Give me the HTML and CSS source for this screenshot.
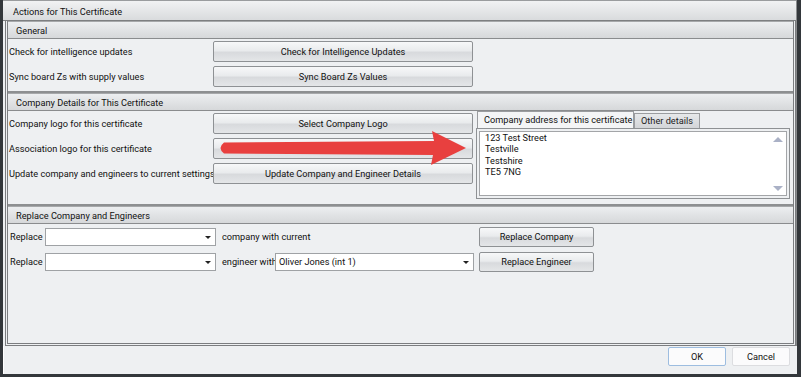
FILE: index.html
```html
<!DOCTYPE html>
<html lang="en">
<head>
  <meta charset="UTF-8">
  <title>Actions for This Certificate</title>
  <link rel="stylesheet" href="styles.css">
</head>
<body>
  <div class="window">
    <div class="main-group">
      <div class="main-title">Actions for This Certificate</div>
      <div class="main-body">

        <div class="section">
          <div class="section-title">General</div>
          <div class="section-body rows">
            <div class="row">
              <span class="label">Check for intelligence updates</span>
              <button class="btn wide">Check for Intelligence Updates</button>
            </div>
            <div class="row">
              <span class="label">Sync board Zs with supply values</span>
              <button class="btn wide">Sync Board Zs Values</button>
            </div>
          </div>
        </div>

        <div class="section">
          <div class="section-title">Company Details for This Certificate</div>
          <div class="section-body company">
            <div class="rows">
              <div class="row">
                <span class="label">Company logo for this certificate</span>
                <button class="btn wide">Select Company Logo</button>
              </div>
              <div class="row">
                <span class="label">Association logo for this certificate</span>
                <button class="btn wide">Select Association Logo</button>
              </div>
              <div class="row">
                <span class="label">Update company and engineers to current settings</span>
                <button class="btn wide">Update Company and Engineer Details</button>
              </div>
            </div>
            <div class="tabs">
              <div class="tab-strip">
                <span class="tab active">Company address for this certificate</span>
                <span class="tab">Other details</span>
              </div>
              <div class="tab-page">
                <div class="address">
                  <div>123 Test Street</div>
                  <div>Testville</div>
                  <div>Testshire</div>
                  <div>TE5 7NG</div>
                  <span class="scroll-up"></span>
                  <span class="scroll-down"></span>
                </div>
              </div>
            </div>
            <svg class="arrow" width="260" height="40" viewBox="0 0 260 40">
              <path d="M10 12.5 L220 11 L218 1 L252 18 L217 35 L219 25 L10 23.5 Q3 18 10 12.5 Z" fill="#e8403f"/>
            </svg>
          </div>
        </div>

        <div class="section last">
          <div class="section-title">Replace Company and Engineers</div>
          <div class="section-body rows">
            <div class="row">
              <span class="short-label">Replace</span>
              <span class="combo"></span>
              <span class="mid-label">company with current</span>
              <button class="btn small">Replace Company</button>
            </div>
            <div class="row">
              <span class="short-label">Replace</span>
              <span class="combo"></span>
              <span class="mid-label clip">engineer with</span>
              <span class="combo engineer">Oliver Jones (int 1)</span>
              <button class="btn small">Replace Engineer</button>
            </div>
          </div>
        </div>

      </div>
    </div>
    <div class="footer">
      <button class="dlg-btn default">OK</button>
      <button class="dlg-btn">Cancel</button>
    </div>
  </div>
</body>
</html>
```

FILE: styles.css
```css
* {
    box-sizing: border-box;
}

body {
    margin: 0;
    background-color: #2e3236;
    font-family: Roboto, "Liberation Sans", sans-serif;
    font-size: 9.2px;
    color: #111;
}

.window {
    width: 801px;
    height: 377px;
    border-left: 3px solid #33373b;
    border-right: 4px solid #33373b;
    border-bottom: 3px solid #33373b;
    background-color: #eef0f2;
    display: flex;
    flex-direction: column;
}

.main-group {
    height: 346px;
    display: flex;
    flex-direction: column;
    border-right: 1px solid #8a8c8e;
}

.main-title {
    height: 21px;
    line-height: 21px;
    padding-left: 10px;
    background: linear-gradient(#f1f2f3, #d9dbdd);
    border-top: 1px solid #9a9c9e;
    border-bottom: 1px solid #7d7f81;
}

.main-body {
    flex: 1;
    margin-left: 2px;
    border: 3px double #7b7d80;
    border-top: none;
    display: flex;
    flex-direction: column;
}

.section {
    border-bottom: 2px solid #8d8f91;
}

.section.last {
    border-bottom: none;
}

.section-title {
    height: 18px;
    line-height: 17px;
    padding-left: 8px;
    background: linear-gradient(#eceef0, #d6d8da);
    border-top: 1px solid #a6a8aa;
    border-bottom: 1px solid #8a8c8e;
}

.rows {
    display: flex;
    flex-direction: column;
    gap: 4px;
}

.section-body.rows {
    padding: 2px 0 4px 0;
}

.row {
    display: flex;
    align-items: center;
    height: 21px;
}

.label {
    width: 205px;
    padding-left: 1px;
    white-space: nowrap;
}

.btn {
    height: 21px;
    font: inherit;
    color: #111;
    background: linear-gradient(#f7f8f9 0%, #e9ebed 45%, #d8dadd 55%, #e4e6e8 100%);
    border: 1px solid #8e9194;
    border-radius: 2px;
    padding: 0;
}

.btn.wide {
    width: 260px;
}

.company {
    position: relative;
    display: flex;
    gap: 3px;
    padding: 0 3px 0 0;
    height: 93px;
}

.company .rows {
    padding-top: 2px;
}

.tabs {
    flex: 1;
    display: flex;
    flex-direction: column;
}

.tab-strip {
    display: flex;
    align-items: flex-end;
    height: 17px;
    padding-left: 1px;
}

.tab {
    height: 15px;
    line-height: 14px;
    padding: 0 6px;
    border: 1px solid #9a9c9f;
    border-bottom: none;
    background: linear-gradient(#e6e8ea, #d3d5d8);
    color: #222;
    white-space: nowrap;
}

.tab.active {
    width: 157px;
    height: 17px;
    line-height: 16px;
    background: #f4f5f6;
    color: #111;
}

.tab-page {
    height: 71px;
    border: 1px solid #8e9194;
    padding: 2px;
    background: #eef0f2;
}

.address {
    position: relative;
    height: 100%;
    background: #fff;
    border: 1px solid #a3a5a8;
    padding: 0 5px;
    line-height: 11.3px;
}

.scroll-up,
.scroll-down {
    position: absolute;
    right: 3px;
    width: 0;
    height: 0;
    border-left: 5px solid transparent;
    border-right: 5px solid transparent;
}

.scroll-up {
    top: 5px;
    border-bottom: 5px solid #aab1c6;
}

.scroll-down {
    bottom: 4px;
    border-top: 5px solid #aab1c6;
}

.arrow {
    position: absolute;
    left: 206px;
    top: 19px;
}

.short-label {
    width: 37px;
    padding-left: 2px;
}

.combo {
    position: relative;
    width: 171px;
    height: 18px;
    background: #fff;
    border: 1px solid #9fa2a5;
    line-height: 16px;
    padding-left: 3px;
}

.combo::after {
    content: "";
    position: absolute;
    right: 4px;
    top: 7px;
    border-left: 3px solid transparent;
    border-right: 3px solid transparent;
    border-top: 3px solid #222;
}

.combo.engineer {
    width: 199px;
}

.mid-label {
    width: 263px;
    padding-left: 6px;
    white-space: nowrap;
}

.mid-label.clip {
    width: 59px;
    overflow: hidden;
}

.btn.small {
    width: 115px;
    height: 20px;
}

.combo.engineer + .btn.small {
    margin-left: 5px;
}

.footer {
    flex: 1;
    display: flex;
    justify-content: flex-end;
    align-items: flex-start;
    gap: 6px;
    padding: 1px 7px 0 0;
    border-left: 1px solid #ffffff;
}

.dlg-btn {
    width: 58px;
    height: 19px;
    font: inherit;
    color: #111;
    background: #fbfbfc;
    border: 1px solid #dcdde0;
    border-radius: 2px;
}

.dlg-btn.default {
    border-color: #9dbde0;
}
```
